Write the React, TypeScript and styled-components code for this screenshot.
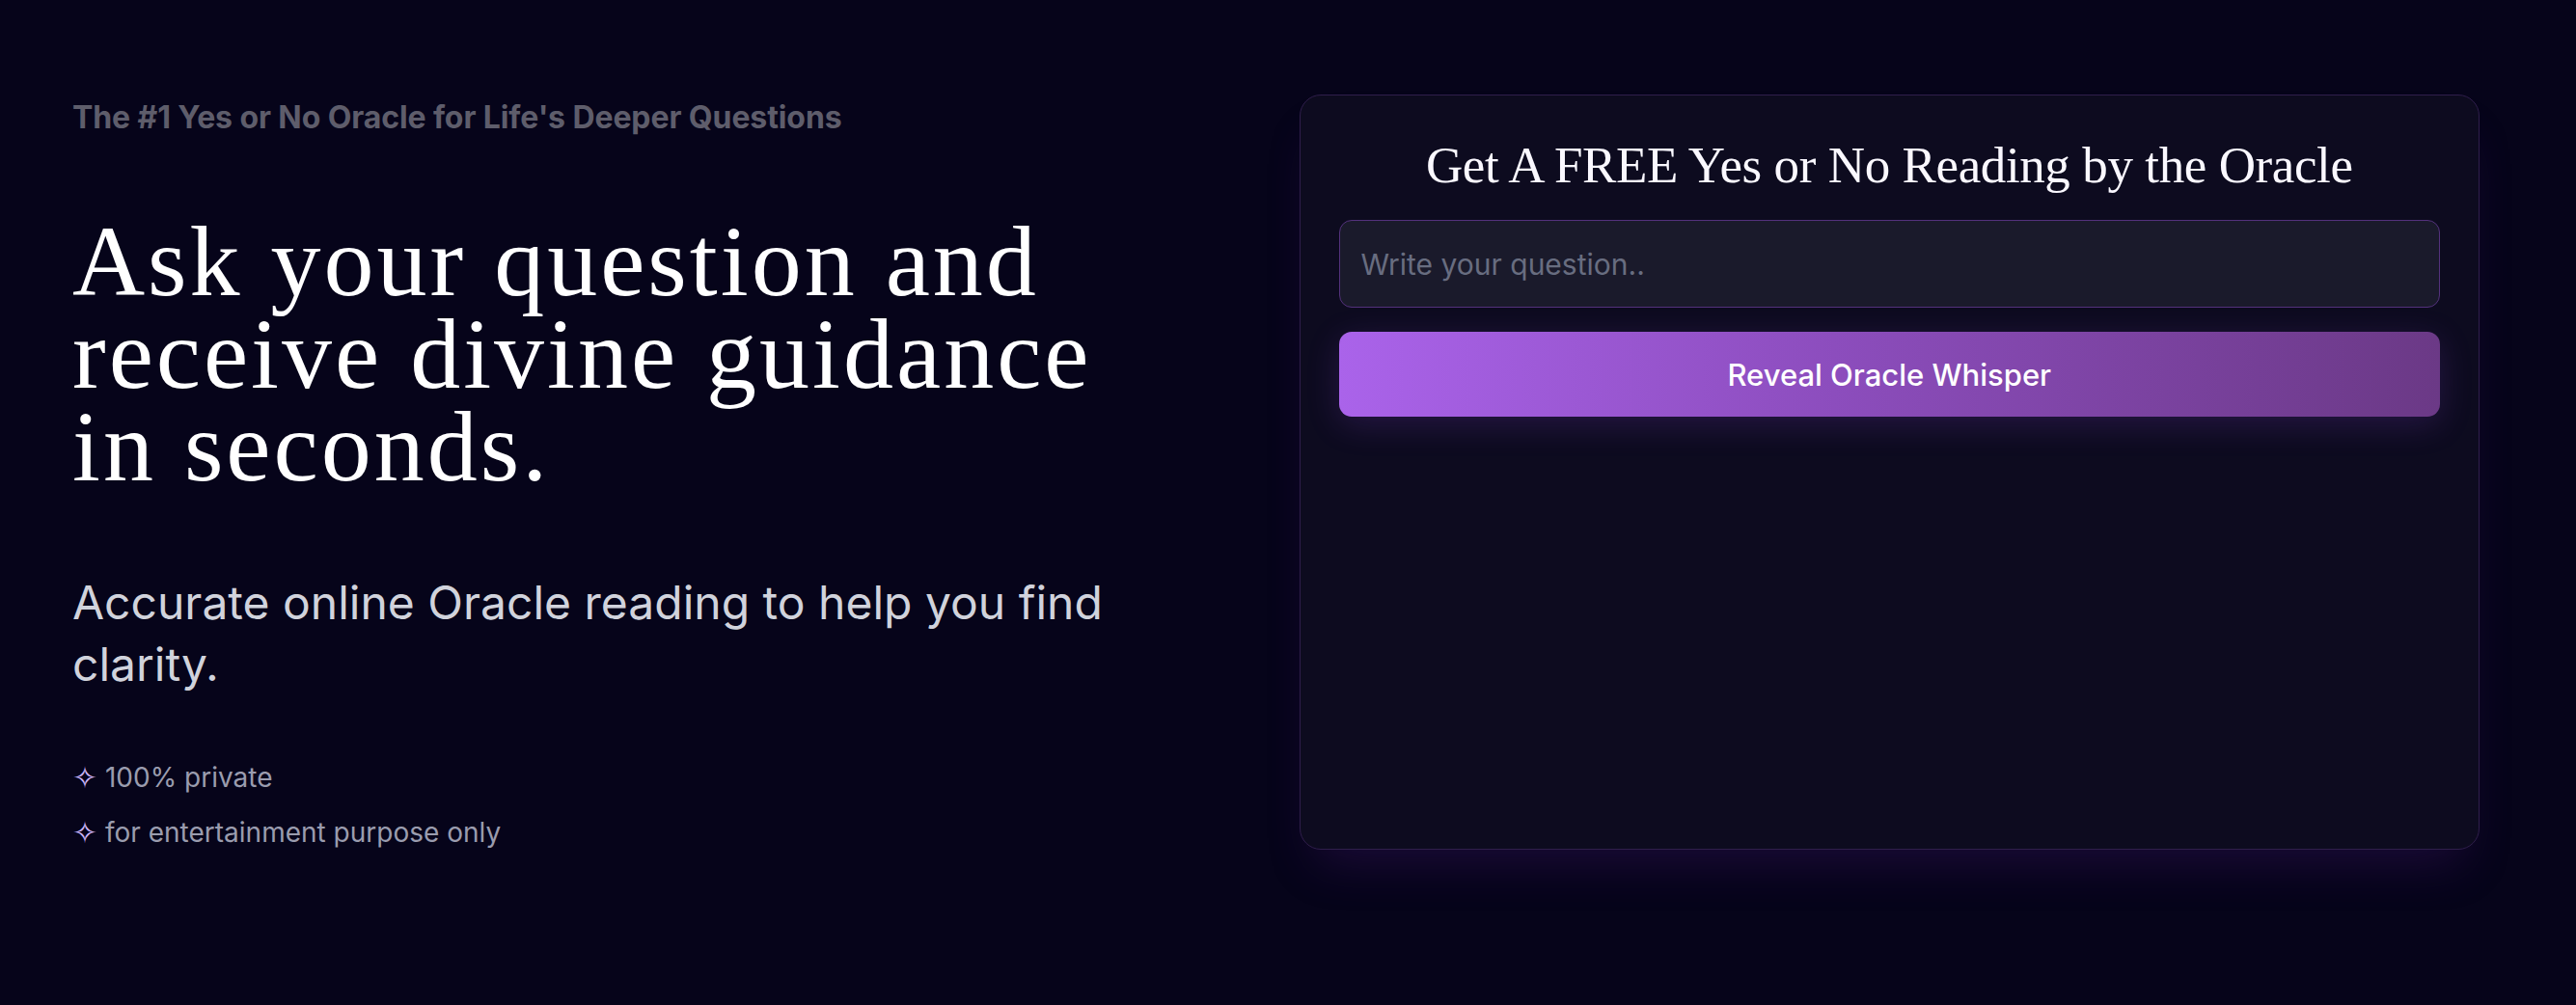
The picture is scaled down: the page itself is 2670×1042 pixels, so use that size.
import styled, { createGlobalStyle } from 'styled-components';

const GlobalStyle = createGlobalStyle`
  html, body {
    margin: 0;
    padding: 0;
    background: #06041a;
  }

  body {
    font-family: Inter, 'Noto Sans', sans-serif;
    color: #ffffff;
  }
`;

const Page = styled.main`
  display: grid;
  grid-template-columns: 1fr 1fr;
  gap: 48px;
  min-height: 1042px;
  box-sizing: border-box;
  padding: 98px 100px 0 75px;
  align-items: start;
`;

const Intro = styled.section`
  display: flex;
  flex-direction: column;
`;

const Tagline = styled.p`
  margin: 0;
  font-size: 32px;
  line-height: 48px;
  font-weight: 700;
  letter-spacing: -0.1px;
  color: #5e5d6b;
`;

const Headline = styled.h1`
  margin: 77px 0 0;
  font-family: 'Liberation Serif', 'Times New Roman', serif;
  font-weight: 400;
  font-size: 104px;
  line-height: 96px;
  letter-spacing: 3px;
  color: #ffffff;
`;

const Lead = styled.p`
  margin: 82px 0 0;
  font-size: 48px;
  line-height: 64px;
  font-weight: 400;
  color: #d1d3dc;
`;

const Perks = styled.ul`
  margin: 64px 0 0;
  padding: 0;
  list-style: none;
  display: flex;
  flex-direction: column;
  gap: 15px;
`;

const Perk = styled.li`
  display: flex;
  align-items: center;
  gap: 8px;
  font-size: 28px;
  line-height: 42px;
  color: #9a9cae;
`;

const Sparkle = styled.span`
  font-family: 'DejaVu Sans', sans-serif;
  font-size: 31px;
  line-height: 42px;
  color: #cdb6fa;
`;

const Card = styled.section`
  height: 783px;
  box-sizing: border-box;
  padding: 40px;
  background: #0d0b1f;
  border: 1px solid #2f1e4b;
  border-radius: 22px;
  box-shadow: 0 30px 50px -18px rgba(80, 25, 130, 0.3);
  display: flex;
  flex-direction: column;
  gap: 25px;
`;

const CardTitle = styled.h2`
  margin: 0;
  text-align: center;
  font-family: 'Liberation Serif', 'Times New Roman', serif;
  font-weight: 400;
  font-size: 53px;
  line-height: 64px;
  letter-spacing: -0.4px;
  color: #faf8ff;
`;

const QuestionInput = styled.input`
  height: 91px;
  box-sizing: border-box;
  padding: 0 22px;
  background: #1a1a2b;
  border: 1px solid #53317c;
  border-radius: 13px;
  font-family: Inter, sans-serif;
  font-size: 30px;
  color: #e5e7eb;
  outline: none;

  &::placeholder {
    color: #686d80;
  }
`;

const RevealButton = styled.button`
  height: 88px;
  border: none;
  border-radius: 13px;
  background: linear-gradient(90deg, #aa63ea 0%, #8c4dbd 45%, #6b3986 100%);
  box-shadow: 0 8px 34px rgba(140, 70, 220, 0.2);
  font-family: Inter, sans-serif;
  font-size: 31px;
  font-weight: 500;
  color: #ffffff;
  cursor: pointer;
`;

export default function App() {
  return (
    <>
      <GlobalStyle />
      <Page>
        <Intro>
          <Tagline>The #1 Yes or No Oracle for Life's Deeper Questions</Tagline>
          <Headline>
            Ask your question and
            <br />
            receive divine guidance
            <br />
            in seconds.
          </Headline>
          <Lead>Accurate online Oracle reading to help you find clarity.</Lead>
          <Perks>
            <Perk>
              <Sparkle>✧</Sparkle>100% private
            </Perk>
            <Perk>
              <Sparkle>✧</Sparkle>for entertainment purpose only
            </Perk>
          </Perks>
        </Intro>
        <Card>
          <CardTitle>Get A FREE Yes or No Reading by the Oracle</CardTitle>
          <QuestionInput placeholder="Write your question.." />
          <RevealButton>Reveal Oracle Whisper</RevealButton>
        </Card>
      </Page>
    </>
  );
}
